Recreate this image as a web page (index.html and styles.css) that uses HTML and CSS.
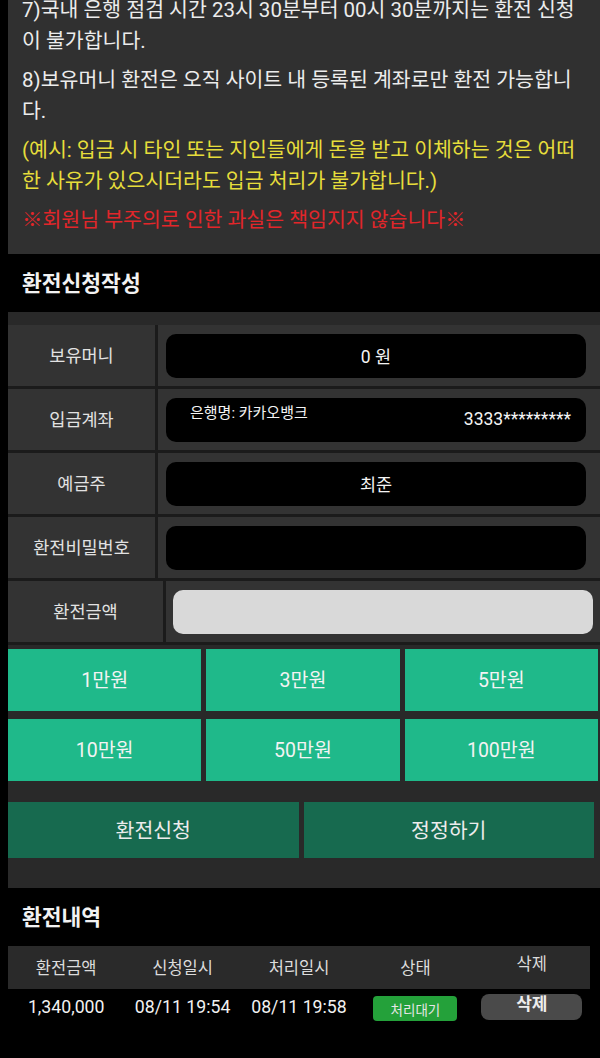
FILE: index.html
```html
<!DOCTYPE html>
<html lang="ko">
<head>
<meta charset="utf-8">
<title>환전신청</title>
<link rel="stylesheet" href="styles.css">
</head>
<body>
<div class="page">
  <section class="notice">
    <p>7)국내 은행 점검 시간 23시 30분부터 00시 30분까지는 환전 신청<br>이 불가합니다.</p>
    <p>8)보유머니 환전은 오직 사이트 내 등록된 계좌로만 환전 가능합니<br>다.</p>
    <p class="warn">(예시: 입금 시 타인 또는 지인들에게 돈을 받고 이체하는 것은 어떠<br>한 사유가 있으시더라도 입금 처리가 불가합니다.)</p>
    <p class="alert">※회원님 부주의로 인한 과실은 책임지지 않습니다※</p>
  </section>

  <h2 class="section-title">환전신청작성</h2>

  <section class="form">
    <div class="row">
      <div class="label">보유머니</div>
      <div class="value"><div class="field">0 원</div></div>
    </div>
    <div class="row">
      <div class="label">입금계좌</div>
      <div class="value"><div class="field field-account"><span class="bank">은행명: 카카오뱅크</span><span class="acct">3333*********</span></div></div>
    </div>
    <div class="row">
      <div class="label">예금주</div>
      <div class="value"><div class="field">최준</div></div>
    </div>
    <div class="row">
      <div class="label">환전비밀번호</div>
      <div class="value"><div class="field"></div></div>
    </div>
    <div class="row row-amount">
      <div class="label">환전금액</div>
      <div class="value"><div class="field field-light"></div></div>
    </div>

    <div class="quick">
      <button class="quick-btn">1만원</button>
      <button class="quick-btn">3만원</button>
      <button class="quick-btn">5만원</button>
      <button class="quick-btn">10만원</button>
      <button class="quick-btn">50만원</button>
      <button class="quick-btn">100만원</button>
    </div>

    <div class="actions">
      <button class="action-btn">환전신청</button>
      <button class="action-btn">정정하기</button>
    </div>
  </section>

  <h2 class="section-title">환전내역</h2>

  <div class="history">
    <div class="hist-row hist-head">
      <div class="cell">환전금액</div>
      <div class="cell">신청일시</div>
      <div class="cell">처리일시</div>
      <div class="cell">상태</div>
      <div class="cell cell-up">삭제</div>
    </div>
    <div class="hist-row hist-data">
      <div class="cell">1,340,000</div>
      <div class="cell">08/11 19:54</div>
      <div class="cell">08/11 19:58</div>
      <div class="cell"><span class="badge">처리대기</span></div>
      <div class="cell"><button class="del-btn">삭제</button></div>
    </div>
  </div>
</div>
</body>
</html>
```

FILE: styles.css
```css
html, body {
  margin: 0;
  padding: 0;
  background: #000;
}

body {
  font-family: Roboto, "Noto Sans CJK KR", sans-serif;
  color: #eeeeee;
  overflow: hidden;
}

.page {
  padding-left: 8px;
}

/* notice box */
.notice {
  margin-top: -5px;
  background: #303030;
  padding: 0 10px 18px 14px;
}

.notice p {
  margin: 0 0 8px 0;
  font-size: 20.5px;
  line-height: 31px;
  white-space: nowrap;
  color: #ececec;
}

.notice p:last-child {
  margin-bottom: 0;
}

.notice .warn {
  color: #e6dd3b;
}

.notice .alert {
  color: #e2262a;
}

/* section headings */
.section-title {
  margin: 0;
  height: 58px;
  display: flex;
  align-items: center;
  padding: 0 0 4px 14px;
  box-sizing: border-box;
  font-size: 21.5px;
  font-weight: 700;
  color: #f2f2f2;
}

/* form */
.form {
  background: #292929;
  padding: 13px 0 30px 0;
}

.row {
  display: flex;
  height: 64px;
  border-bottom: 3px solid #1b1b1b;
  box-sizing: border-box;
}

.label {
  flex: none;
  width: 150px;
  background: #333333;
  border-right: 3px solid #1b1b1b;
  display: flex;
  align-items: center;
  justify-content: center;
  padding-bottom: 3px;
  box-sizing: border-box;
  font-size: 17.5px;
  color: #e2e2e2;
}

.value {
  flex: 1;
  background: #333333;
  display: flex;
  align-items: center;
  padding: 0 14px 0 8px;
}

.field {
  flex: 1;
  height: 44px;
  background: #000;
  border-radius: 10px;
  display: flex;
  align-items: center;
  justify-content: center;
  font-size: 17.5px;
  color: #f4f4f4;
}

.field-account {
  justify-content: space-between;
  align-items: flex-start;
  padding: 5px 15px 0 24px;
  box-sizing: border-box;
}

.field-account .bank {
  font-size: 15px;
  line-height: 21px;
}

.field-account .acct {
  margin-top: 5px;
  font-size: 17.5px;
  line-height: 22px;
}

.row-amount .label {
  width: 158px;
}

.row-amount .value {
  padding: 0 7px 0 7px;
}

.field-light {
  background: #d9d9d9;
}

/* quick amount buttons */
.quick {
  margin-top: 4px;
  padding-right: 2px;
  display: grid;
  grid-template-columns: repeat(3, 1fr);
  grid-auto-rows: 62px;
  column-gap: 5px;
  row-gap: 8px;
}

button {
  font-family: inherit;
  border: none;
  margin: 0;
  padding: 0;
  cursor: pointer;
}

.quick-btn {
  background: #1fb98a;
  color: #f3f3f3;
  font-size: 19.5px;
  padding-bottom: 4px;
}

.actions {
  margin-top: 21px;
  padding-right: 6px;
  display: grid;
  grid-template-columns: 1fr 1fr;
  column-gap: 5px;
}

.action-btn {
  height: 56px;
  background: #176a4f;
  color: #ececec;
  font-size: 20.5px;
  padding-bottom: 3px;
}

/* history */
.history {
  width: 582px;
}

.hist-row {
  display: grid;
  grid-template-columns: repeat(5, 1fr);
}

.hist-head {
  height: 43px;
  background: #2a2a2a;
  padding-bottom: 2px;
  box-sizing: border-box;
}

.cell {
  display: flex;
  align-items: center;
  justify-content: center;
  white-space: nowrap;
}

.hist-head .cell {
  font-size: 16.5px;
  color: #dcdcdc;
}

.hist-head .cell-up {
  padding-bottom: 8px;
}

.hist-data {
  height: 36px;
}

.hist-data .cell {
  font-size: 17.7px;
  color: #f2f2f2;
}

.badge {
  width: 84px;
  height: 25px;
  border-radius: 4px;
  background: #24a13a;
  color: #e6e6e6;
  font-size: 13.5px;
  display: flex;
  align-items: center;
  justify-content: center;
  margin-top: 3px;
}

.del-btn {
  width: 101px;
  height: 26px;
  border-radius: 8px;
  background: #4a4a4a;
  color: #ededed;
  font-size: 17px;
  font-weight: 700;
  padding-bottom: 5px;
  line-height: 21px;
  box-sizing: border-box;
}
```
